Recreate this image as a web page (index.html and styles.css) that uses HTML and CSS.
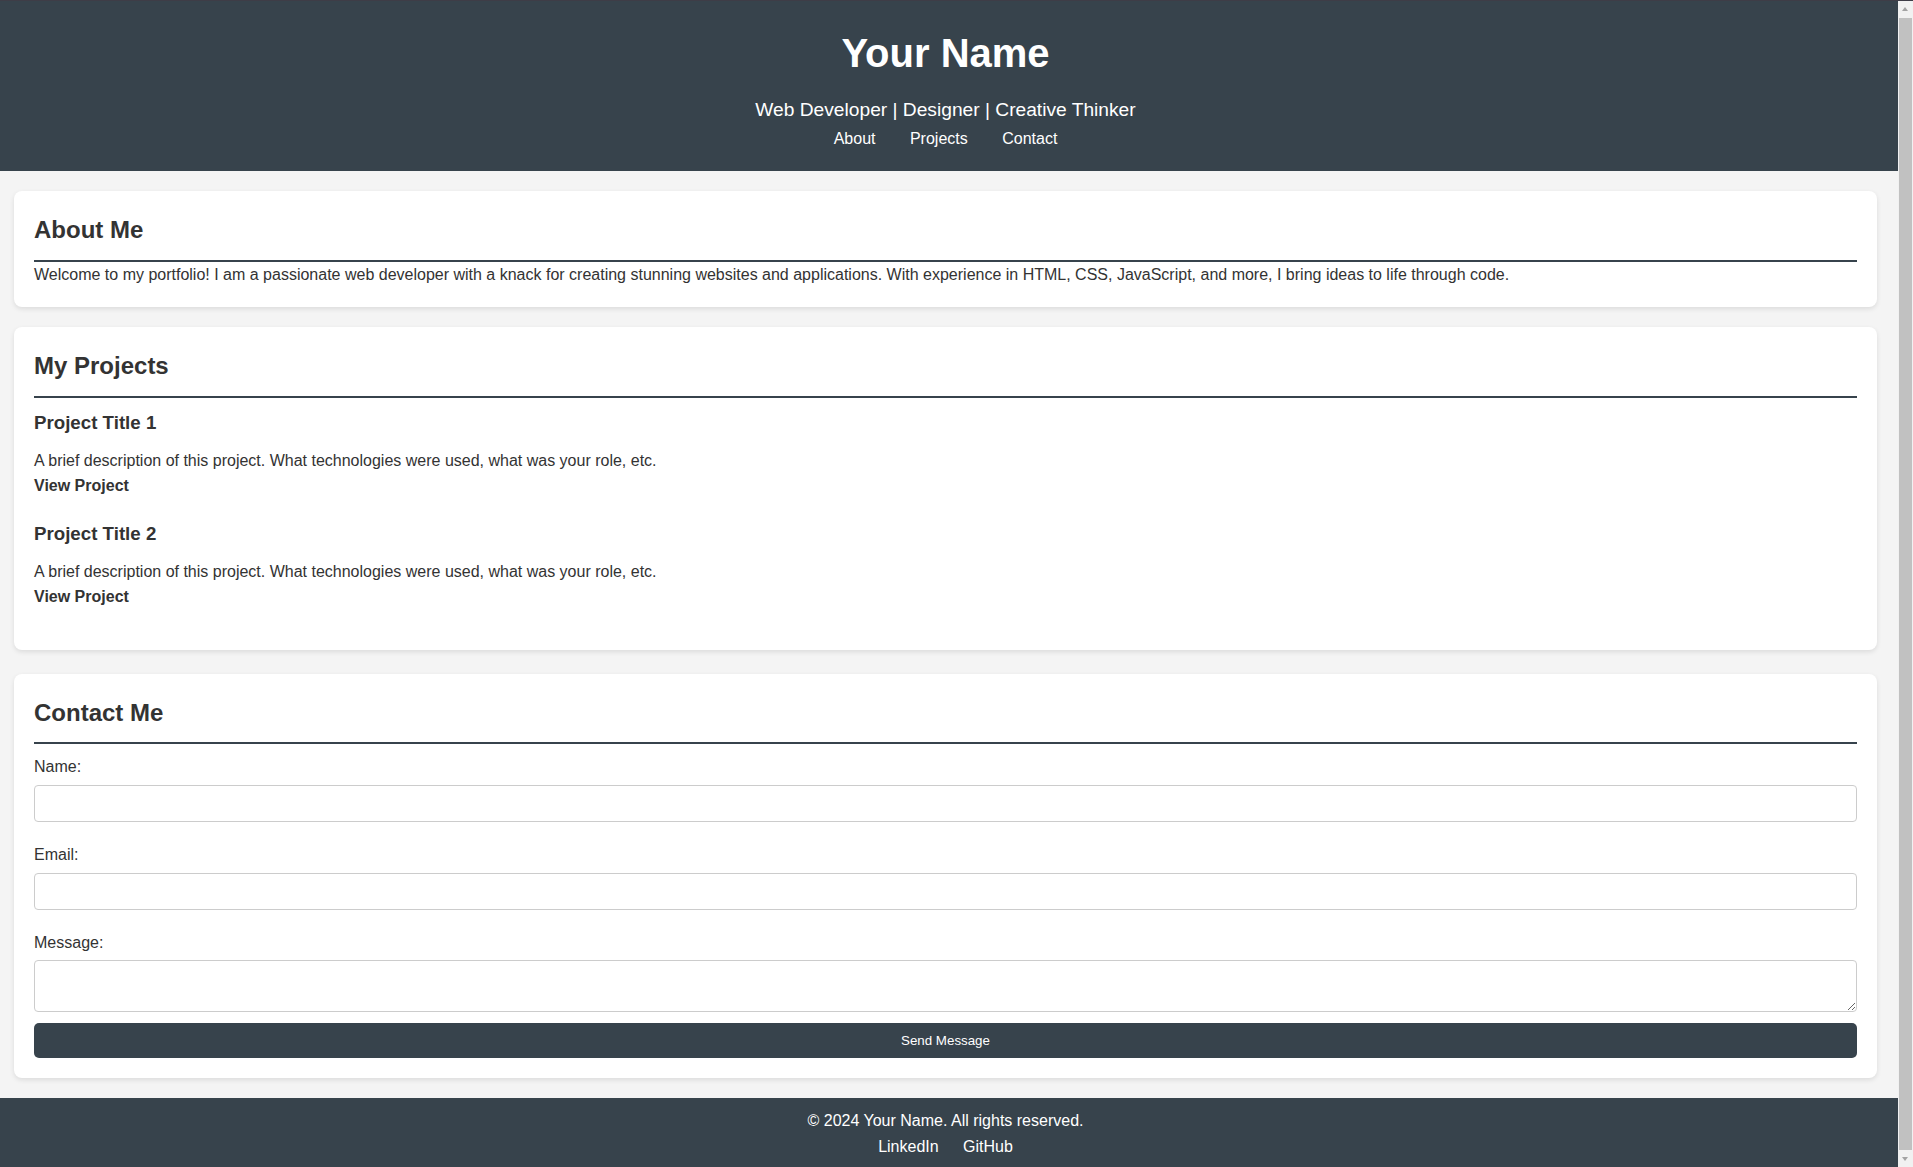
FILE: index.html
```html
<!DOCTYPE html>
<html lang="en">
<head>
<meta charset="utf-8">
<title>Your Name - Portfolio</title>
<link rel="stylesheet" href="styles.css">
</head>
<body>
<header class="site-header">
  <h1 class="site-title">Your Name</h1>
  <p class="tagline">Web Developer | Designer | Creative Thinker</p>
  <nav class="site-nav">
    <a href="#about">About</a>
    <a href="#projects">Projects</a>
    <a href="#contact">Contact</a>
  </nav>
</header>

<main class="content">
  <section class="card" id="about">
    <h2 class="card-title">About Me</h2>
    <p class="card-text">Welcome to my portfolio! I am a passionate web developer with a knack for creating stunning websites and applications. With experience in HTML, CSS, JavaScript, and more, I bring ideas to life through code.</p>
  </section>

  <section class="card" id="projects">
    <h2 class="card-title">My Projects</h2>
    <div class="project">
      <h3 class="project-title">Project Title 1</h3>
      <p class="project-text">A brief description of this project. What technologies were used, what was your role, etc.<br><a class="project-link" href="#">View Project</a></p>
    </div>
    <div class="project">
      <h3 class="project-title">Project Title 2</h3>
      <p class="project-text">A brief description of this project. What technologies were used, what was your role, etc.<br><a class="project-link" href="#">View Project</a></p>
    </div>
  </section>

  <section class="card card-contact" id="contact">
    <h2 class="card-title">Contact Me</h2>
    <form class="contact-form">
      <label class="field-label" for="name">Name:</label>
      <input class="field-input" type="text" id="name" name="name">
      <label class="field-label" for="email">Email:</label>
      <input class="field-input" type="email" id="email" name="email">
      <label class="field-label" for="message">Message:</label>
      <textarea class="field-area" id="message" name="message"></textarea>
      <button class="send-btn" type="button">Send Message</button>
    </form>
  </section>
</main>

<footer class="site-footer">
  <p class="copyright">&copy; 2024 Your Name. All rights reserved.</p>
  <div class="social">
    <a href="#">LinkedIn</a>
    <a href="#">GitHub</a>
  </div>
</footer>

<div class="scrollbar" aria-hidden="true">
  <span class="scroll-arrow scroll-up"></span>
  <span class="scroll-thumb"></span>
  <span class="scroll-arrow scroll-down"></span>
</div>
</body>
</html>
```

FILE: styles.css
```css
html {
  background: #f4f4f4;
}

body {
  margin: 0 15px 0 0;
  background: #f4f4f4;
  color: #333;
  font-family: "Liberation Sans", Arial, sans-serif;
  font-size: 16px;
  line-height: 1.6;
}

.site-header {
  background: #37434c;
  color: #fff;
  text-align: center;
  border-top: 1px solid #3e3d47;
  padding: 20px 7px 20px 0;
}

.site-title {
  margin: 0;
  font-size: 40px;
  font-weight: bold;
}

.tagline {
  margin: 10px 0 0;
  font-size: 19.2px;
}

.site-nav a {
  color: #fff;
  text-decoration: none;
  margin: 0 15px;
}

.content {
  padding: 20px 21px 20px 14px;
}

.card {
  background: #fff;
  border-radius: 8px;
  box-shadow: 0 2px 5px rgba(0, 0, 0, 0.1);
  padding: 20px;
  margin-bottom: 20px;
}

.card:last-child {
  margin-bottom: 0;
}

.card-contact {
  margin-top: 24px;
}

.card-title {
  margin: 0;
  font-size: 24px;
  padding-bottom: 10px;
  border-bottom: 2px solid #37434c;
}

.card-text {
  margin: 0;
}

.project {
  margin-bottom: 20px;
}

.project-title {
  margin: 10px 0;
  font-size: 18.72px;
}

.project-text {
  margin: 10px 0;
}

.project-link {
  color: #333;
  font-weight: bold;
  text-decoration: none;
}

.contact-form {
  padding-top: 10px;
}

.field-label {
  display: block;
  margin-bottom: 5px;
}

.field-input,
.field-area {
  display: block;
  box-sizing: border-box;
  width: 100%;
  padding: 10px;
  border: 1px solid #ccc;
  border-radius: 4px;
  background: #fff;
  font-family: "Liberation Sans", Arial, sans-serif;
  font-size: 13.33px;
  margin: 0 0 20px;
}

.field-input {
  height: 37px;
}

.field-area {
  height: 52px;
  margin-bottom: 11px;
}

.send-btn {
  display: block;
  width: 100%;
  height: 35px;
  padding: 10px;
  border: none;
  border-radius: 5px;
  background: #37434c;
  color: #fff;
  font-family: "Liberation Sans", Arial, sans-serif;
  font-size: 13.33px;
  line-height: 15px;
  cursor: pointer;
}

.site-footer {
  background: #37434c;
  color: #fff;
  text-align: center;
  padding: 10px 7px 14px 0;
}

.copyright {
  margin: 0;
}

.social a {
  color: #fff;
  text-decoration: none;
  margin: 0 10px;
}

/* window scrollbar overlay (part of the captured screen) */
.scrollbar {
  position: fixed;
  top: 0;
  right: 0;
  bottom: 0;
  width: 15px;
  background: #f1f1f1;
  border-top: 1px solid #3e3d47;
  box-sizing: border-box;
}

.scroll-thumb {
  position: absolute;
  top: 17px;
  bottom: 17px;
  left: 1px;
  right: 1px;
  background: #c1c1c1;
}

.scroll-arrow {
  position: absolute;
  left: 4px;
  width: 0;
  height: 0;
  border-left: 3.5px solid transparent;
  border-right: 3.5px solid transparent;
}

.scroll-up {
  top: 6px;
  border-bottom: 4px solid #a3a3a3;
}

.scroll-down {
  bottom: 6px;
  border-top: 4px solid #a3a3a3;
}
```
